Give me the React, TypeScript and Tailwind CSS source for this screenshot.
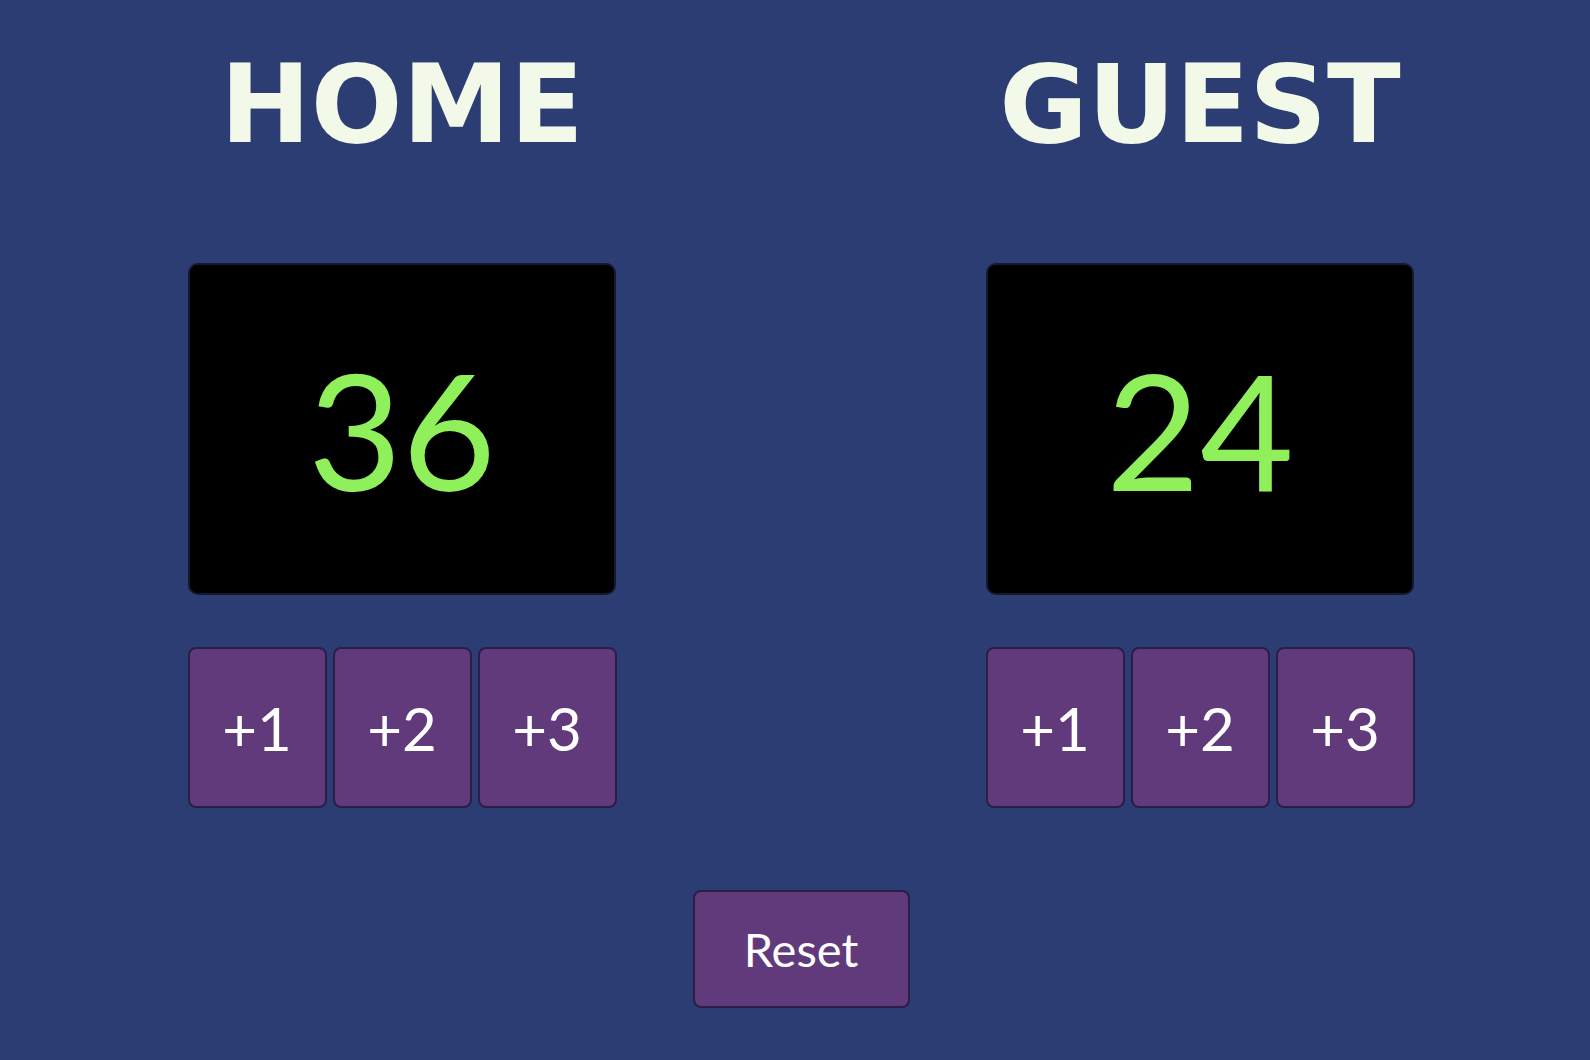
import React, { useState } from "react";

function Team({ name, score, onAdd }: { name: string; score: number; onAdd: (n: number) => void }) {
  return (
    <div className="flex w-[428px] flex-col items-center">
      <h1
        className="mt-[3px] h-[109px] text-[108px] font-bold leading-none text-[#f3f9e8]"
        style={{ fontFamily: '"DejaVu Sans", Verdana, sans-serif' }}
      >
        {name}
      </h1>
      <div className="mt-[103px] flex h-[332px] w-[428px] items-center justify-center rounded-[10px] border-2 border-[#141a2e] bg-black">
        <span
          className="text-[162px] font-normal leading-none text-[#8ff05c]"
          style={{ fontFamily: 'Lato, "Open Sans", sans-serif' }}
        >
          {score}
        </span>
      </div>
      <div className="mt-[52px] flex gap-[6px]">
        {[1, 2, 3].map((n) => (
          <button
            key={n}
            onClick={() => onAdd(n)}
            className="flex h-[161px] w-[139px] items-center justify-center rounded-[8px] border-2 border-[#2a1e45] bg-[#613a7c] text-[60px] font-normal leading-none text-white"
            style={{ fontFamily: 'Lato, "Open Sans", sans-serif' }}
          >
            +{n}
          </button>
        ))}
      </div>
    </div>
  );
}

export default function App() {
  const [home, setHome] = useState(36);
  const [guest, setGuest] = useState(24);
  return (
    <div className="flex h-[1060px] w-full flex-col items-center overflow-hidden bg-[#2b3d72] pl-[12px] pt-[48px]">
      <div className="flex gap-[370px]">
        <Team name="HOME" score={home} onAdd={(n) => setHome(home + n)} />
        <Team name="GUEST" score={guest} onAdd={(n) => setGuest(guest + n)} />
      </div>
      <button
        onClick={() => {
          setHome(0);
          setGuest(0);
        }}
        className="mt-[82px] flex h-[118px] w-[217px] items-center justify-center rounded-[8px] border-2 border-[#2a1e45] bg-[#613a7c] text-[47px] leading-none text-white"
        style={{ fontFamily: 'Lato, "Open Sans", sans-serif' }}
      >
        Reset
      </button>
    </div>
  );
}
